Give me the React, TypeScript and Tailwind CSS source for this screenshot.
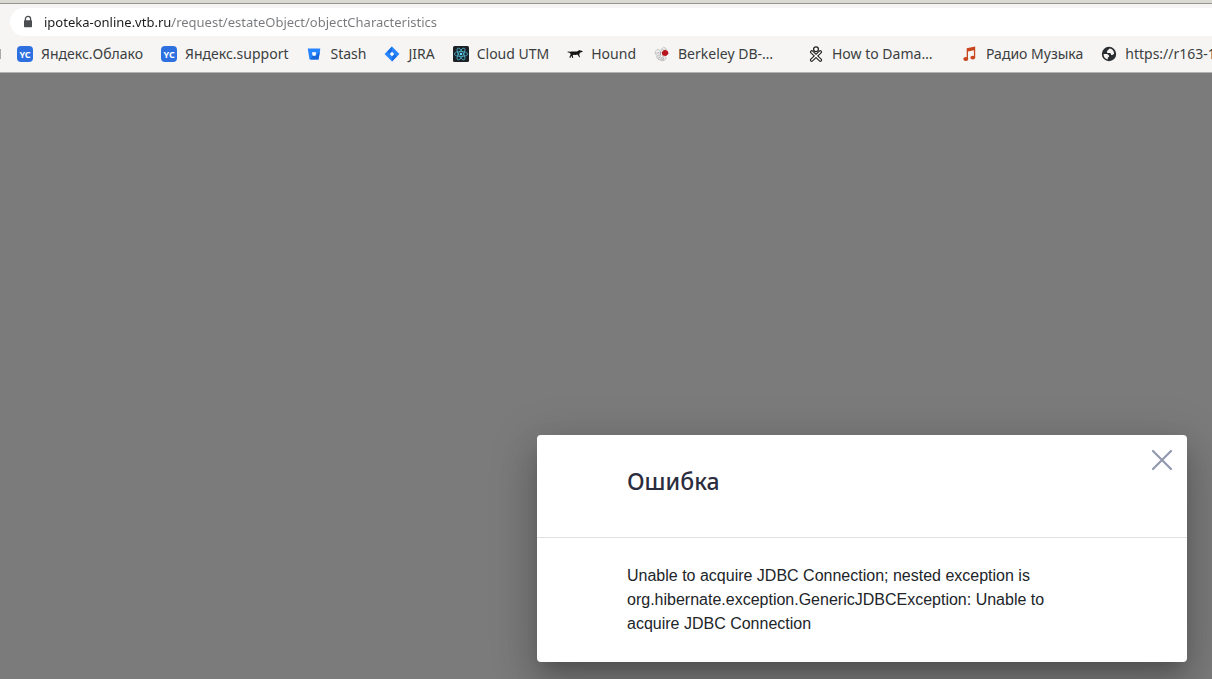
import type { ReactNode } from "react";

const iconClass = "size-4 shrink-0";

function YandexCloudIcon() {
  return (
    <span aria-hidden="true" className="flex size-4 shrink-0 items-center justify-center rounded bg-[#2f70e0] text-[9px] leading-none font-bold text-white">
      YC
    </span>
  );
}

function StashIcon() {
  return (
    <svg viewBox="0 0 16 16" className={iconClass} aria-hidden="true">
      <path d="M2.3 2.4h11.5a.5.5 0 0 1 .5.6l-1.7 9.9a.7.7 0 0 1-.7.6H4.2a.8.8 0 0 1-.8-.6L1.8 3a.5.5 0 0 1 .5-.6z" fill="#2684ff" />
      <path d="M10 9.6l3.9-3.9-1.3 7.2a.7.7 0 0 1-.7.6H4.5l2-3.9z" fill="#1766d9" />
      <path d="M6 6.2h4.2l-.7 3.6H6.7z" fill="#fff" />
    </svg>
  );
}

function JiraIcon() {
  return (
    <svg viewBox="0 0 16 16" className={iconClass} aria-hidden="true">
      <path d="M8 .6L15.4 8 8 15.4.6 8z" fill="#2684ff" />
      <path d="M8 .6v4.8L5.6 7.8 3.2 5.4zM8 15.4v-4.8l2.4-2.4 2.4 2.4z" fill="#1a6fe6" />
      <path d="M8 5.8L10.2 8 8 10.2 5.8 8z" fill="#fff" />
    </svg>
  );
}

function ReactIcon() {
  return (
    <svg viewBox="0 0 16 16" className={iconClass} aria-hidden="true">
      <rect width="16" height="16" rx="1.5" fill="#1c2126" />
      <g fill="none" stroke="#4fb3cb" strokeWidth="0.8">
        <ellipse cx="8" cy="8" rx="6.6" ry="2.5" />
        <ellipse cx="8" cy="8" rx="6.6" ry="2.5" transform="rotate(60 8 8)" />
        <ellipse cx="8" cy="8" rx="6.6" ry="2.5" transform="rotate(120 8 8)" />
      </g>
      <circle cx="8" cy="8" r="1.3" fill="#61dafb" />
    </svg>
  );
}

function HoundIcon() {
  return (
    <svg viewBox="0 0 16 16" className={iconClass} aria-hidden="true">
      <path d="M.6 5.6l2.8.2 1-.4 5.6.1 1.6-1 1.1-.4.6.4 2.3.5-.2 1-2.1.4-1 1.5.1 1.4.7 2h-.9l-1-1.8-.9-1-1.6.5-2.2-.2-.8.6.6 2.6h-.9l-.9-2-1 1 .2 1.1h-1l-.1-1.7.9-1.5-.1-1.3-.9-.9-1.9-.4z" fill="#151515" />
    </svg>
  );
}

function BerkeleyIcon() {
  return (
    <svg viewBox="0 0 16 16" className={iconClass} aria-hidden="true">
      <g fill="#f1f1f1" stroke="#b0b0b0" strokeWidth="0.7">
        <path d="M1.2 5.4l2.6-2.2 2.4 1.6.2 3-2.8 1.8-2.2-1.4z" />
        <path d="M7 3.6L9.6 1.2l2.6 1.4-.6 2.2-3 1.2z" />
        <path d="M2.4 10.6l2.8-1 2 1.6-.4 3-2.6-.8z" />
        <path d="M7.8 11.4l2.6-1.2 1.8 1.6-1.8 2.4-2.8.8z" />
      </g>
      <path d="M2.4 7.2l2.8-.6M8.6 3l1.2 2M4 12.4l2-1M9.4 11.6l-.4 2.6M6.6 5.6v4" stroke="#8a8a8a" strokeWidth="0.7" />
      <path d="M7.7 6.2L10.7 3.8l2.8 1 1.1 2.6-2.5 2.5-3.6-.5z" fill="#b8141b" />
    </svg>
  );
}

function FigureIcon() {
  return (
    <svg viewBox="0 0 16 16" className={iconClass} aria-hidden="true">
      <g fill="none" strokeLinecap="round">
        <path d="M3.8 6L12.3 14M12.2 6L3.7 14" stroke="#222" strokeWidth="3.6" />
        <circle cx="8" cy="3.2" r="2.4" fill="#fff" stroke="#222" strokeWidth="1.3" />
        <path d="M3.8 6L12.3 14M12.2 6L3.7 14" stroke="#fff" strokeWidth="1.3" />
      </g>
    </svg>
  );
}

function MusicIcon() {
  return (
    <svg viewBox="0 0 16 16" className={iconClass} aria-hidden="true">
      <path d="M4.7 2.2L13.2.5v10.7h-1.3V4.3L6 5.5v7.2H4.7z" fill="#c8461e" />
      <ellipse cx="3.8" cy="13" rx="2.5" ry="1.9" fill="#c8461e" />
      <ellipse cx="10.8" cy="11.6" rx="2.4" ry="1.9" fill="#c8461e" />
    </svg>
  );
}

function GlobeIcon() {
  return (
    <svg viewBox="0 0 16 16" className={iconClass} aria-hidden="true">
      <circle cx="8" cy="8" r="7.2" fill="#2b2e31" />
      <path d="M8.6 2.6L6.8 4.2l-1 1.3.6 1.6h3.1l.6 2h1.4l1.6-1.4a5.4 5.4 0 0 0-4.5-5.1z" fill="#f6f5f4" />
      <path d="M2.6 8h3.6l1.8 1.4v1.3l-1.4 1 .4 1.7A5.4 5.4 0 0 1 2.6 8z" fill="#f6f5f4" />
    </svg>
  );
}

const bookmarks: { label: string; icon: ReactNode; long?: boolean }[] = [
  { label: "Яндекс.Облако", icon: <YandexCloudIcon /> },
  { label: "Яндекс.support", icon: <YandexCloudIcon /> },
  { label: "Stash", icon: <StashIcon /> },
  { label: "JIRA", icon: <JiraIcon /> },
  { label: "Cloud UTM", icon: <ReactIcon /> },
  { label: "Hound", icon: <HoundIcon /> },
  { label: "Berkeley DB-…", icon: <BerkeleyIcon />, long: true },
  { label: "How to Dama…", icon: <FigureIcon />, long: true },
  { label: "Радио Музыка", icon: <MusicIcon /> },
  { label: "https://r163-1", icon: <GlobeIcon /> },
];

function BrowserBar() {
  return (
    <header className="overflow-hidden border-b border-[#b4b3b0] bg-[#f6f5f4] font-['Noto_Sans',sans-serif]">
      <div className="h-1 border-b border-[#979792] bg-[#dad9d2]" />
      <div className="pt-1 pl-2.5">
        <label className="flex h-7 items-center gap-2 rounded-l-full bg-white pl-3">
          <svg viewBox="0 0 12 14" className="h-3.5 w-3 shrink-0" role="img" aria-label="Адрес">
            <path d="M3.4 6V4a2.6 2.6 0 0 1 5.2 0v2" fill="none" stroke="#4b4d50" strokeWidth="1.3" />
            <rect x="2" y="5.3" width="8" height="7" rx="0.8" fill="#4b4d50" />
          </svg>
          <input
            type="text"
            spellCheck={false}
            defaultValue="ipoteka-online.vtb.ru/request/estateObject/objectCharacteristics"
            className="h-7 min-w-0 flex-1 bg-[linear-gradient(90deg,#1b1c1e_130px,#77797c_130px)] bg-clip-text px-0.5 text-[13px] text-transparent caret-black outline-none"
          />
        </label>
      </div>
      <nav className="flex h-9 items-center gap-[18px] text-sm whitespace-nowrap text-[#3b3e40]">
        <span className="-mr-0.5 h-2.5 w-px shrink-0 bg-[#a9a9a9]" />
        {bookmarks.map((item) => (
          <a key={item.label} href="#" className="flex shrink-0 items-center gap-2">
            {item.icon}
            <span className={item.long ? "w-28" : ""}>{item.label}</span>
          </a>
        ))}
      </nav>
    </header>
  );
}

function ErrorDialog() {
  return (
    <section
      role="dialog"
      aria-labelledby="error-title"
      className="w-full max-w-[650px] rounded bg-white shadow-[0_11px_15px_-7px_rgba(0,0,0,0.2),0_24px_38px_3px_rgba(0,0,0,0.14),0_9px_46px_8px_rgba(0,0,0,0.12)]"
    >
      <div className="flex items-start justify-between border-b border-[#dfe0e3] pt-3 pr-3 pb-[38px] pl-[90px]">
        <h1 id="error-title" className="pt-4 font-['Noto_Sans',sans-serif] text-[23px] leading-9 font-medium text-[#2b2d3e]">
          Ошибка
        </h1>
        <button type="button" aria-label="Закрыть" className="p-0.5">
          <svg viewBox="0 0 22 22" className="size-[22px]" aria-hidden="true">
            <path d="M2 2l18 18M20 2L2 20" stroke="#9299ad" strokeWidth="2.2" strokeLinecap="round" />
          </svg>
        </button>
      </div>
      <p className="px-[90px] py-[26px] text-base text-[#212529]">
        Unable to acquire JDBC Connection; nested exception is org.hibernate.exception.GenericJDBCException: Unable to acquire JDBC Connection
      </p>
    </section>
  );
}

export default function App() {
  return (
    <div className="flex min-h-screen flex-col bg-[#7b7b7b] font-['Liberation_Sans',Arial,sans-serif]">
      <BrowserBar />
      <main className="flex flex-1 items-end justify-end overflow-hidden pr-[25px] pb-[17px]">
        <ErrorDialog />
      </main>
    </div>
  );
}
